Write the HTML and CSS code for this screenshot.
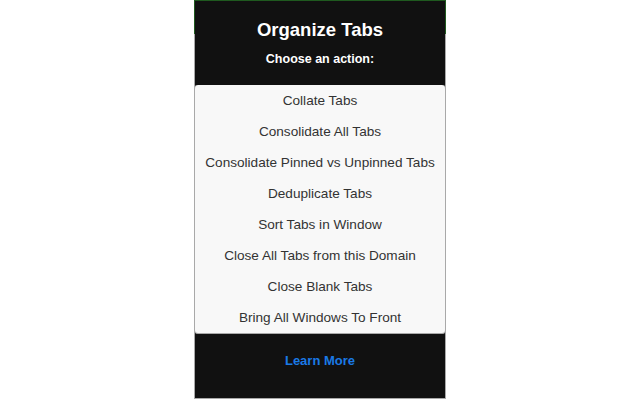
FILE: index.html
```html
<!DOCTYPE html>
<html>
<head>
<meta charset="utf-8">
<link rel="stylesheet" href="styles.css">
</head>
<body>
<div class="panel">
  <h1 class="title">Organize Tabs</h1>
  <p class="subtitle">Choose an action:</p>
  <ul class="actions">
    <li>Collate Tabs</li>
    <li>Consolidate All Tabs</li>
    <li>Consolidate Pinned vs Unpinned Tabs</li>
    <li>Deduplicate Tabs</li>
    <li>Sort Tabs in Window</li>
    <li>Close All Tabs from this Domain</li>
    <li>Close Blank Tabs</li>
    <li>Bring All Windows To Front</li>
  </ul>
  <a class="learn" href="#">Learn More</a>
</div>
</body>
</html>
```
FILE: styles.css
```css
html, body {
  margin: 0;
  padding: 0;
  background: #ffffff;
}
body {
  font-family: "Liberation Sans", Arial, sans-serif;
}
.panel {
  position: relative;
  box-sizing: border-box;
  width: 252px;
  height: 399px;
  margin: 0 auto;
  background: #111111;
  border: 1px solid #a9a9a9;
  border-top-color: #1f5a1f;
  display: flex;
  flex-direction: column;
  align-items: stretch;
}
.panel::before {
  content: "";
  position: absolute;
  left: -1px;
  right: -1px;
  top: -1px;
  height: 33px;
  border: 1px solid #1f5a1f;
  border-bottom: none;
  pointer-events: none;
}
.title {
  margin: 17px 0 0;
  font-size: 18.5px;
  line-height: 24px;
  font-weight: bold;
  color: #ffffff;
  text-align: center;
}
.subtitle {
  margin: 8px 0 0;
  font-size: 12.5px;
  line-height: 18px;
  font-weight: bold;
  color: #ffffff;
  text-align: center;
}
.actions {
  list-style: none;
  margin: 17px -1px 0;
  padding: 0;
  background: #f8f8f8;
  border: 1px solid #a9a9a9;
  border-top: none;
  border-radius: 4px;
}
.actions li {
  height: 31px;
  line-height: 32px;
  font-size: 13.6px;
  color: #333333;
  text-align: center;
}
.learn {
  margin-top: 18px;
  font-size: 13px;
  line-height: 18px;
  font-weight: bold;
  color: #1a7ae6;
  text-decoration: none;
  text-align: center;
}
```
